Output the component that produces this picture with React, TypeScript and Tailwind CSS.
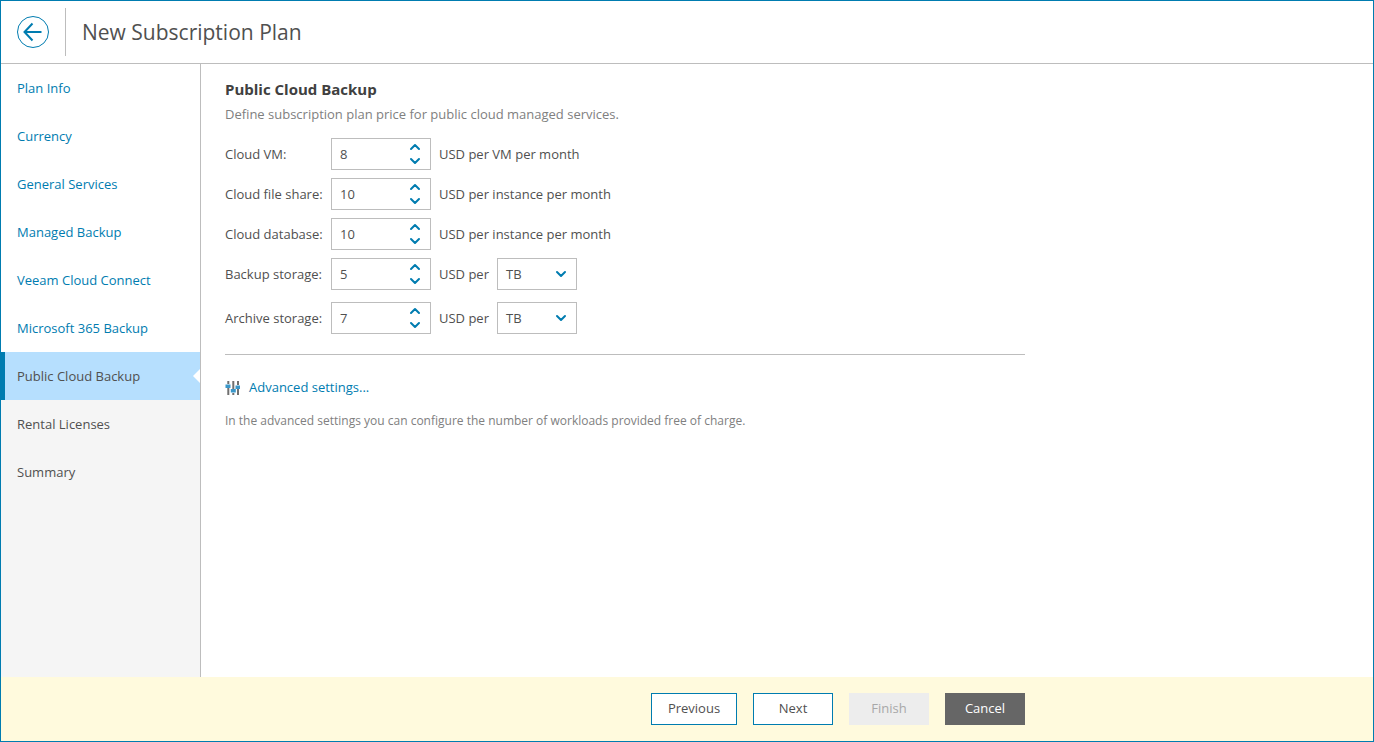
import { ChevronDown, ChevronUp } from "lucide-react";

const steps = [
  "Plan Info",
  "Currency",
  "General Services",
  "Managed Backup",
  "Veeam Cloud Connect",
  "Microsoft 365 Backup",
  "Public Cloud Backup",
  "Rental Licenses",
  "Summary",
];

function Spinner({ value }: { value: string }) {
  return (
    <div className="flex h-8 w-[100px] shrink-0 items-center justify-between border border-[#bdbdbd] pl-2 pr-[7px]">
      <span className="pt-[2px]">{value}</span>
      <div className="flex flex-col items-center text-[#007cb0]">
        <ChevronUp className="-mb-px h-4 w-4" strokeWidth={3} />
        <ChevronDown className="-mt-px h-4 w-4" strokeWidth={3} />
      </div>
    </div>
  );
}

function Unit() {
  return (
    <div className="ml-[8px] flex items-center">
      <span className="w-[58px] pt-[2px]">USD per</span>
      <div className="flex h-8 w-20 items-center justify-between border border-[#bdbdbd] pl-2 pr-[7px]">
        <span className="pt-[2px]">TB</span>
        <ChevronDown className="h-4 w-4 text-[#007cb0]" strokeWidth={3} />
      </div>
    </div>
  );
}

export default function App() {
  return (
    <div className="flex h-[742px] w-full flex-col border border-[#007cb0] bg-white font-['Open_Sans',sans-serif] text-[13px] text-[#505050]">
      {/* header */}
      <div className="flex h-[63px] shrink-0 items-center border-b border-[#bdbdbd] pl-4">
        <svg className="h-8 w-8 text-[#007cb0]" viewBox="0 0 32 32" fill="none" stroke="currentColor">
          <circle cx="16" cy="16" r="15.5" />
          <path d="M7.5 16H24.5M15.5 7.5L7.5 16L15.5 24.5" strokeWidth="2" />
        </svg>
        <div className="ml-4 h-[48px] w-px bg-[#bdbdbd]" />
        <h1 className="ml-4 pt-[2px] text-[21px] text-[#505050]">New Subscription Plan</h1>
      </div>

      <div className="flex min-h-0 flex-1">
        {/* steps */}
        <nav className="w-[200px] shrink-0 border-r border-[#bdbdbd] bg-[#f5f5f5]">
          {steps.map((s, i) => {
            const active = i === 6;
            const done = i < 6;
            return (
              <div
                key={s}
                className={
                  active
                    ? "relative flex h-12 items-center border-l-[4px] border-[#007cb0] bg-[#b6dffe] pl-3 pt-[2px]"
                    : done
                      ? "flex h-12 items-center bg-white pl-4 pt-[2px] text-[#007cb0]"
                      : "flex h-12 items-center pl-4 pt-[2px]"
                }
              >
                {s}
                {active && (
                  <span className="absolute right-0 top-[17px] h-0 w-0 border-y-[7px] border-r-[7px] border-y-transparent border-r-white" />
                )}
              </div>
            );
          })}
        </nav>

        {/* content */}
        <main className="flex-1 pl-6 pt-[15px]">
          <h2 className="text-[15px] font-bold leading-5 text-[#404040]">Public Cloud Backup</h2>
          <p className="mt-[5px] leading-5 text-[#808080]">Define subscription plan price for public cloud managed services.</p>

          <div className="mt-[14px] flex h-8 items-center">
            <span className="w-[106px] pt-[2px]">Cloud VM:</span>
            <Spinner value="8" />
            <span className="ml-[8px] pt-[2px]">USD per VM per month</span>
          </div>
          <div className="mt-2 flex h-8 items-center">
            <span className="w-[106px] pt-[2px]">Cloud file share:</span>
            <Spinner value="10" />
            <span className="ml-[8px] pt-[2px]">USD per instance per month</span>
          </div>
          <div className="mt-2 flex h-8 items-center">
            <span className="w-[106px] pt-[2px]">Cloud database:</span>
            <Spinner value="10" />
            <span className="ml-[8px] pt-[2px]">USD per instance per month</span>
          </div>
          <div className="mt-2 flex h-8 items-center">
            <span className="w-[106px] pt-[2px]">Backup storage:</span>
            <Spinner value="5" />
            <Unit />
          </div>
          <div className="mt-3 flex h-8 items-center">
            <span className="w-[106px] pt-[2px]">Archive storage:</span>
            <Spinner value="7" />
            <Unit />
          </div>

          <div className="mt-5 h-px w-[800px] bg-[#bdbdbd]" />

          <div className="mt-[23px] flex h-5 items-center">
            <svg className="h-[14px] w-[15px]" viewBox="0 0 15 14">
              <path d="M3.3 0V3M3.3 7V14M8.3 0V8M8.3 12V14M13 0V4M13 8V14" stroke="#707070" strokeWidth="2" fill="none" />
              <path d="M0.5 3.5H5.5V7H0.5ZM5.8 8H10.8V11.5H5.8ZM10.5 4.5H15V8H10.5Z" fill="#3a97c9" />
            </svg>
            <span className="ml-[9px] text-[#007cb0]">Advanced settings...</span>
          </div>
          <p className="mt-[13px] text-[12px] leading-5 text-[#808080]">
            In the advanced settings you can configure the number of workloads provided free of charge.
          </p>
        </main>
      </div>

      {/* footer */}
      <div className="flex h-16 shrink-0 items-center bg-[#fffadd] pl-[650px]">
        <button className="h-8 w-[86px] border border-[#007cb0] bg-white">Previous</button>
        <button className="ml-4 h-8 w-20 border border-[#007cb0] bg-white">Next</button>
        <button className="ml-4 h-8 w-20 bg-[#ededed] text-[#a8a8a8]">Finish</button>
        <button className="ml-4 h-8 w-20 bg-[#666666] text-white">Cancel</button>
      </div>
    </div>
  );
}
